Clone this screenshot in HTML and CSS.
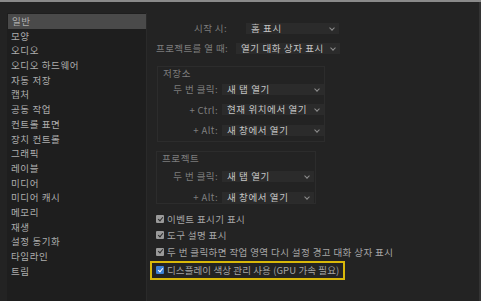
FILE: index.html
```html
<html>
  <head>
    <title>환경 설정 - 일반</title>
    <link rel="stylesheet" href="styles.css">
  </head>
  <body>
  <div class="top"></div>
  <div class="win">
    <div class="side">
      <div class="item sel">일반</div>
      <div class="item">모양</div>
      <div class="item">오디오</div>
      <div class="item">오디오 하드웨어</div>
      <div class="item">자동 저장</div>
      <div class="item">캡처</div>
      <div class="item">공동 작업</div>
      <div class="item">컨트롤 표면</div>
      <div class="item">장치 컨트롤</div>
      <div class="item">그래픽</div>
      <div class="item">레이블</div>
      <div class="item">미디어</div>
      <div class="item">미디어 캐시</div>
      <div class="item">메모리</div>
      <div class="item">재생</div>
      <div class="item">설정 동기화</div>
      <div class="item">타임라인</div>
      <div class="item">트림</div>
    </div>
    <div class="pane">
      <div class="row r1">
        <span class="lab w71">시작 시:</span>
        <span class="drop g19 s93">홈 표시<i></i></span>
      </div>
      <div class="row r2">
        <span class="lab w71">프로젝트를 열 때:</span>
        <span class="drop g9 s104">열기 대화 상자 표시<i></i></span>
      </div>

      <div class="grp g1">
        <div class="gt">저장소</div>
        <div class="row">
          <span class="lab w52">두 번 클릭:</span>
          <span class="drop g4 s102">새 탭 열기<i></i></span>
        </div>
        <div class="row">
          <span class="lab w52">+ Ctrl:</span>
          <span class="drop g4 s102">현재 위치에서 열기<i></i></span>
        </div>
        <div class="row">
          <span class="lab w52">+ Alt:</span>
          <span class="drop g4 s102">새 창에서 열기<i></i></span>
        </div>
      </div>

      <div class="grp g2">
        <div class="gt">프로젝트</div>
        <div class="row">
          <span class="lab w53">두 번 클릭:</span>
          <span class="drop g4 s92">새 탭 열기<i></i></span>
        </div>
        <div class="row">
          <span class="lab w53">+ Alt:</span>
          <span class="drop g4 s92">새 창에서 열기<i></i></span>
        </div>
      </div>

      <div class="checks">
        <div class="chk"><b></b>이벤트 표시기 표시</div>
        <div class="chk"><b></b>도구 설명 표시</div>
        <div class="chk"><b></b>두 번 클릭하면 작업 영역 다시 설정 경고 대화 상자 표시</div>
        <div class="chk hi"><b></b>디스플레이 색상 관리 사용 (GPU 가속 필요)</div>
      </div>
    </div>
  </div>
  </body>
</html>
```

FILE: styles.css
```css
body { margin: 0; background: #232323; font-family: "Noto Sans CJK KR", "Liberation Sans", sans-serif; font-size: 9.5px; color: #aaaaaa; overflow: hidden; }
.top { height: 2px; background: #8a8a8a; }
.win { display: flex; height: 299px; border-right: 2px solid #333; }

.side { width: 139px; margin: 11px 0 0 7px; background: #1e1e1e; border-right: 1px solid #2a2a2a; padding-top: 1px; }
.item { height: 14.7px; line-height: 14.7px; padding-left: 4px; color: #adadad; letter-spacing: 0.6px; }
.sel { background: #4a4a4a; margin-left: 1px; }

.pane { flex: 1; padding: 19px 0 0 9px; }
.row { display: flex; align-items: center; height: 20px; }
.r1 { height: 14px; }
.r2 { height: 14px; margin-top: 6px; }
.lab { text-align: right; color: #7e7e7e; white-space: nowrap; letter-spacing: 0.4px; }
.w71 { width: 71px; }
.w52 { width: 52px; }
.w53 { width: 53px; }
.drop { position: relative; height: 11px; line-height: 11px; background: #2b2b2b; color: #c4c4c4; padding-left: 5px; box-sizing: border-box; white-space: nowrap; letter-spacing: 0.6px; }
.drop i { position: absolute; right: 5px; top: 3px; width: 3px; height: 3px; border-right: 1px solid #8e8e8e; border-bottom: 1px solid #8e8e8e; transform: rotate(45deg); }
.g19 { margin-left: 19px; }
.g9 { margin-left: 9px; }
.g4 { margin-left: 4px; }
.s93 { width: 93px; }
.s104 { width: 104px; }
.s102 { width: 102px; }
.s92 { width: 92px; }

.grp { border: 1px solid #2c2c2c; box-sizing: border-box; padding: 0 0 4px 8px; }
.g1 { width: 168px; height: 76px; margin: 11px 0 0 1px; }
.g2 { width: 160px; height: 53px; margin-top: 9px; }
.gt { height: 11px; line-height: 11px; padding: 1px 0 0 0; margin-left: -3px; color: #7e7e7e; letter-spacing: 0.6px; }
.g1 .row { height: 20.5px; }
.g2 .row { height: 20px; margin-top: 1px; }
.g2 .gt { margin-bottom: 2px; }

.checks { margin-top: 7px; }
.chk { display: flex; align-items: center; height: 16.3px; width: max-content; letter-spacing: 0.4px; color: #a6a6a6; }
.chk b { position: relative; width: 8px; height: 8px; background: #9a9a9a; border-radius: 1px; margin-right: 3px; }
.chk b::after { content: ""; position: absolute; left: 2.5px; top: 0.5px; width: 2px; height: 4px; border-right: 1.5px solid #2a2a2a; border-bottom: 1.5px solid #2a2a2a; transform: rotate(40deg); }
.hi { border: 2px solid #d9b80a; margin: 1px 0 0 -6px; padding: 0 4px 0 4px; height: 15px; letter-spacing: 0.1px; }
.hi b { background: #3b7fd3; }
.hi b::after { border-color: #ffffff; }
```
